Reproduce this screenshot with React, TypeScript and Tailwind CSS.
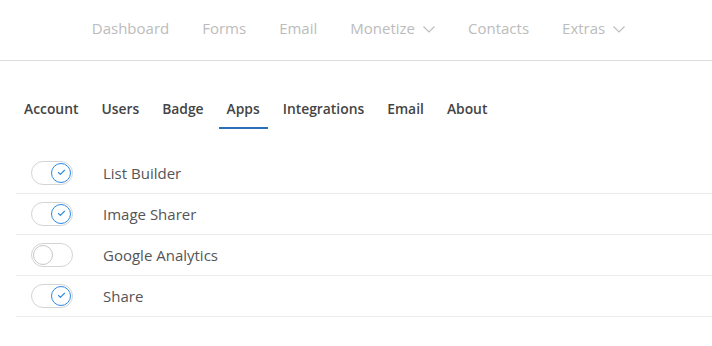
import { Check } from "lucide-react";

const navItems = [
  { label: "Dashboard" },
  { label: "Forms" },
  { label: "Email" },
  { label: "Monetize", menu: true },
  { label: "Contacts" },
  { label: "Extras", menu: true },
];

const tabs = ["Account", "Users", "Badge", "Apps", "Integrations", "Email", "About"];

const apps = [
  { name: "List Builder", on: true },
  { name: "Image Sharer", on: true },
  { name: "Google Analytics", on: false },
  { name: "Share", on: true },
];

function Toggle({ on }: { on: boolean }) {
  return (
    <div
      className={`flex h-6 w-[42px] items-center rounded-full border border-[#d4d4d4] bg-white px-[1px] ${
        on ? "justify-end" : "justify-start"
      }`}
    >
      <div
        className={`flex h-5 w-5 items-center justify-center rounded-full border bg-white ${
          on ? "border-[#2b8ae6]" : "border-[#c8c8c8]"
        }`}
      >
        {on ? <Check className="h-[9px] w-[9px] text-[#2b8ae6]" strokeWidth={3} /> : null}
      </div>
    </div>
  );
}

export default function App() {
  return (
    <div className="min-h-screen bg-white font-['Open_Sans',sans-serif]">
      <header className="flex h-[61px] items-center justify-center gap-[33px] border-b border-[#dcdcdc] pb-[4px] pl-[5px] text-[15px] text-[#bcbcbc]">
        {navItems.map((item) => (
          <span key={item.label} className="flex items-center gap-[8px]">
            {item.label}
            {item.menu ? (
              <svg width="12" height="7" viewBox="0 0 12 7" fill="none" className="mt-[2px]">
                <path d="M0.5 0.5L6 6L11.5 0.5" stroke="#bcbcbc" strokeWidth="1.1" />
              </svg>
            ) : null}
          </span>
        ))}
      </header>

      <div className="pl-4 pt-[38px]">
        <nav className="flex gap-[7px] text-[13.85px] font-semibold text-[#444]">
          {tabs.map((tab) => (
            <span
              key={tab}
              className={`px-2 pb-[7px] ${
                tab === "Apps" ? "border-b-2 border-[#2a6fb8]" : "border-b-2 border-transparent"
              }`}
            >
              {tab}
            </span>
          ))}
        </nav>

        <ul className="mt-[24px]">
          {apps.map((app) => (
            <li
              key={app.name}
              className="flex h-[41px] items-center border-b border-[#ececec] pl-[15px] text-[15px] text-[#555]"
            >
              <Toggle on={app.on} />
              <span className="ml-[30px]">{app.name}</span>
            </li>
          ))}
        </ul>
      </div>
    </div>
  );
}
